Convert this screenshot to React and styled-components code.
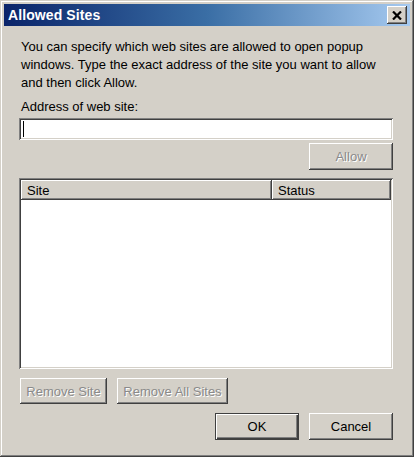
import React from "react";
import styled, { createGlobalStyle } from "styled-components";

const Global = createGlobalStyle`
  html, body { margin: 0; padding: 0; background: #D4D0C8; }
  * { box-sizing: border-box; }
`;

const Window = styled.div`
  width: 414px;
  height: 457px;
  background: #d4d0c8;
  padding: 4px;
  display: flex;
  flex-direction: column;
  font-family: "Liberation Sans", Arial, sans-serif;
  font-size: 13px;
  color: #000;
  box-shadow: inset -1px -1px 0 #404040, inset 1px 1px 0 #d4d0c8,
    inset -2px -2px 0 #808080, inset 2px 2px 0 #ffffff;
`;

const TitleBar = styled.div`
  height: 22px;
  display: flex;
  align-items: center;
  justify-content: space-between;
  padding: 0 3px 0 4px;
  background: linear-gradient(to right, #0a246a 0%, #3a6ea5 50%, #a6caf0 100%);
`;

const Title = styled.span`
  color: #fff;
  font-weight: bold;
  font-size: 14px;
  letter-spacing: 0.1px;
`;

const CloseButton = styled.div`
  width: 20px;
  height: 18px;
  background: #d4d0c8;
  display: flex;
  align-items: center;
  justify-content: center;
  box-shadow: inset -1px -1px 0 #404040, inset 1px 1px 0 #ffffff,
    inset -2px -2px 0 #808080, inset 2px 2px 0 #d4d0c8;
`;

const Content = styled.div`
  flex: 1;
  display: flex;
  flex-direction: column;
  padding: 12px 17px 0 15px;
`;

const Text = styled.p`
  margin: 0;
  padding-left: 2px;
  line-height: 18px;
`;

const Label = styled(Text)`
  margin-top: 6px;
`;

const Sunken = styled.div`
  background: #fff;
  box-shadow: inset 1px 1px 0 #808080, inset -1px -1px 0 #ffffff,
    inset 2px 2px 0 #404040, inset -2px -2px 0 #d4d0c8;
`;

const Input = styled(Sunken)`
  margin-top: 2px;
  height: 22px;
  padding: 3px 0 0 4px;
`;

const Caret = styled.div`
  width: 1px;
  height: 16px;
  background: #000;
`;

const Row = styled.div`
  display: flex;
  gap: 10px;
  margin-top: ${(p) => p.$mt}px;
  padding-left: ${(p) => p.$pl || 0}px;
  justify-content: ${(p) => (p.$end ? "flex-end" : "flex-start")};
`;

const Button = styled.div`
  width: ${(p) => p.$w}px;
  height: ${(p) => p.$h || 26}px;
  display: flex;
  align-items: center;
  justify-content: center;
  background: #d4d0c8;
  color: ${(p) => (p.$disabled ? "#8a8a8a" : "#000")};
  text-shadow: ${(p) => (p.$disabled ? "1px 1px 0 #ffffff" : "none")};
  box-shadow: ${(p) =>
    p.$default
      ? "inset 1px 1px 0 #404040, inset -1px -1px 0 #404040, inset 2px 2px 0 #ffffff, inset -2px -2px 0 #404040, inset -3px -3px 0 #808080"
      : "inset -1px -1px 0 #404040, inset 1px 1px 0 #ffffff, inset -2px -2px 0 #808080, inset 2px 2px 0 #d4d0c8"};
`;

const ListView = styled(Sunken)`
  margin-top: 8px;
  height: 191px;
  padding: 2px;
`;

const Header = styled.div`
  display: flex;
  height: 20px;
`;

const HeaderCell = styled.div`
  width: ${(p) => p.$w}px;
  flex: ${(p) => (p.$grow ? 1 : "none")};
  display: flex;
  align-items: center;
  padding-left: 6px;
  background: #d4d0c8;
  box-shadow: inset -1px -1px 0 #404040, inset 1px 1px 0 #ffffff,
    inset -2px -2px 0 #808080;
`;

export default function App() {
  return (
    <>
      <Global />
      <Window>
        <TitleBar>
          <Title>Allowed Sites</Title>
          <CloseButton>
            <svg width="10" height="9" viewBox="0 0 10 9">
              <path d="M1 0.5 L9 8.5 M9 0.5 L1 8.5" stroke="#000" strokeWidth="2.2" />
            </svg>
          </CloseButton>
        </TitleBar>
        <Content>
          <Text>
            You can specify which web sites are allowed to open popup
            windows. Type the exact address of the site you want to allow
            and then click Allow.
          </Text>
          <Label>Address of web site:</Label>
          <Input>
            <Caret />
          </Input>
          <Row $mt={3} $end>
            <Button $w={84} $h={27} $disabled>
              Allow
            </Button>
          </Row>
          <ListView>
            <Header>
              <HeaderCell $w={251}>Site</HeaderCell>
              <HeaderCell $grow>Status</HeaderCell>
            </Header>
          </ListView>
          <Row $mt={9} $pl={1}>
            <Button $w={87} $disabled>
              Remove Site
            </Button>
            <Button $w={111} $disabled>
              Remove All Sites
            </Button>
          </Row>
          <Row $mt={9} $end>
            <Button $w={84} $h={27} $default>
              OK
            </Button>
            <Button $w={84} $h={27}>
              Cancel
            </Button>
          </Row>
        </Content>
      </Window>
    </>
  );
}
